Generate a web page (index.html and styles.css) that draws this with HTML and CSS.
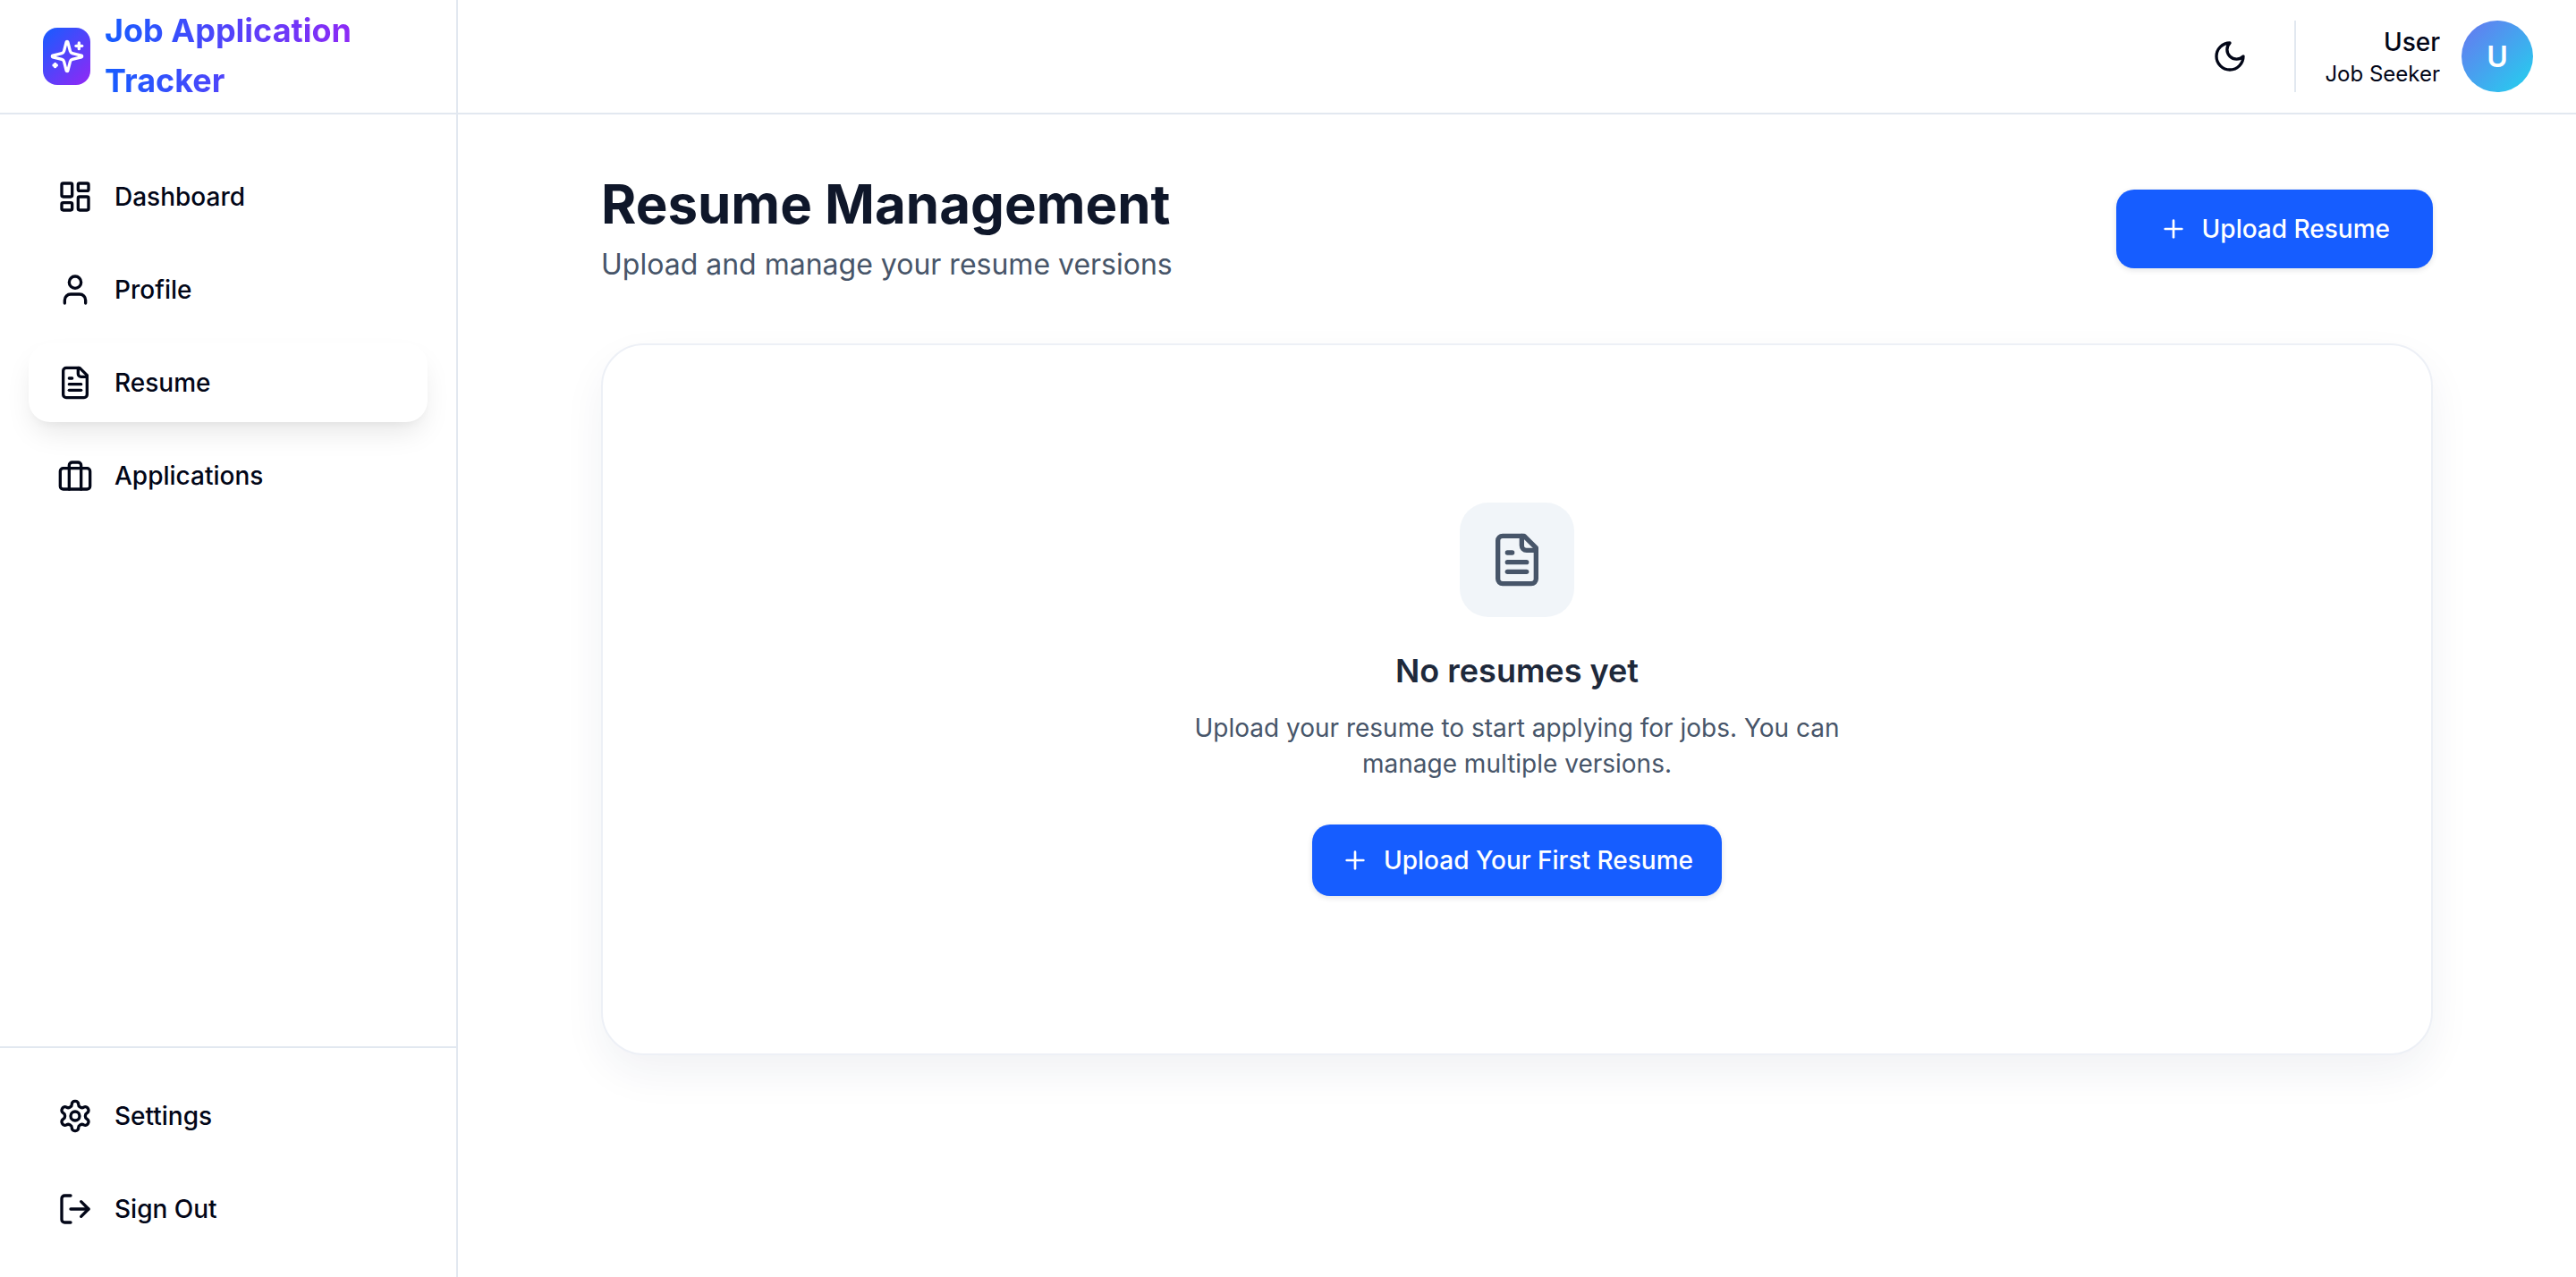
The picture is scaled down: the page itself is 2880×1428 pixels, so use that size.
FILE: index.html
```html
<!DOCTYPE html>
<html lang="en">
<head>
    <meta charset="UTF-8">
    <meta name="viewport" content="width=device-width, initial-scale=1.0">
    <title>Job Application Tracker</title>
    <link rel="stylesheet" href="styles.css">
</head>
<body>
    <div class="app">
        <aside class="sidebar">
            <div class="brand">
                <div class="brand-logo">
                    <svg class="icon" viewBox="0 0 24 24"><path d="M9.937 15.5A2 2 0 0 0 8.5 14.063l-6.135-1.582a.5.5 0 0 1 0-.962L8.5 9.936A2 2 0 0 0 9.937 8.5l1.582-6.135a.5.5 0 0 1 .963 0L14.063 8.5A2 2 0 0 0 15.5 9.937l6.135 1.581a.5.5 0 0 1 0 .964L15.5 14.063a2 2 0 0 0-1.437 1.437l-1.582 6.135a.5.5 0 0 1-.963 0z"/><path d="M20 3v4"/><path d="M22 5h-4"/><path d="M4 17v2"/><path d="M5 18H3"/></svg>
                </div>
                <span class="brand-name">Job Application Tracker</span>
            </div>
            <nav class="nav">
                <a class="nav-item" href="#">
                    <svg class="icon" viewBox="0 0 24 24"><rect x="3" y="3" width="7" height="9" rx="1"/><rect x="14" y="3" width="7" height="5" rx="1"/><rect x="14" y="12" width="7" height="9" rx="1"/><rect x="3" y="16" width="7" height="5" rx="1"/></svg>
                    Dashboard
                </a>
                <a class="nav-item" href="#">
                    <svg class="icon" viewBox="0 0 24 24"><path d="M19 21v-2a4 4 0 0 0-4-4H9a4 4 0 0 0-4 4v2"/><circle cx="12" cy="7" r="4"/></svg>
                    Profile
                </a>
                <a class="nav-item active" href="#">
                    <svg class="icon" viewBox="0 0 24 24"><path d="M15 2H6a2 2 0 0 0-2 2v16a2 2 0 0 0 2 2h12a2 2 0 0 0 2-2V7Z"/><path d="M14 2v4a2 2 0 0 0 2 2h4"/><path d="M10 9H8"/><path d="M16 13H8"/><path d="M16 17H8"/></svg>
                    Resume
                </a>
                <a class="nav-item" href="#">
                    <svg class="icon" viewBox="0 0 24 24"><rect x="2" y="7" width="20" height="14" rx="2"/><path d="M16 21V5a2 2 0 0 0-2-2h-4a2 2 0 0 0-2 2v16"/></svg>
                    Applications
                </a>
            </nav>
            <div class="nav nav-bottom">
                <a class="nav-item" href="#">
                    <svg class="icon" viewBox="0 0 24 24"><path d="M12.22 2h-.44a2 2 0 0 0-2 2v.18a2 2 0 0 1-1 1.73l-.43.25a2 2 0 0 1-2 0l-.15-.08a2 2 0 0 0-2.73.73l-.22.38a2 2 0 0 0 .73 2.73l.15.1a2 2 0 0 1 1 1.72v.51a2 2 0 0 1-1 1.74l-.15.09a2 2 0 0 0-.73 2.73l.22.38a2 2 0 0 0 2.73.73l.15-.08a2 2 0 0 1 2 0l.43.25a2 2 0 0 1 1 1.73V20a2 2 0 0 0 2 2h.44a2 2 0 0 0 2-2v-.18a2 2 0 0 1 1-1.73l.43-.25a2 2 0 0 1 2 0l.15.08a2 2 0 0 0 2.73-.73l.22-.39a2 2 0 0 0-.73-2.73l-.15-.08a2 2 0 0 1-1-1.74v-.5a2 2 0 0 1 1-1.74l.15-.09a2 2 0 0 0 .73-2.73l-.22-.38a2 2 0 0 0-2.73-.73l-.15.08a2 2 0 0 1-2 0l-.43-.25a2 2 0 0 1-1-1.73V4a2 2 0 0 0-2-2z"/><circle cx="12" cy="12" r="3"/></svg>
                    Settings
                </a>
                <a class="nav-item" href="#">
                    <svg class="icon" viewBox="0 0 24 24"><path d="M9 21H5a2 2 0 0 1-2-2V5a2 2 0 0 1 2-2h4"/><path d="m16 17 5-5-5-5"/><path d="M21 12H9"/></svg>
                    Sign Out
                </a>
            </div>
        </aside>

        <div class="content">
            <header class="topbar">
                <button class="theme-toggle" type="button" aria-label="Toggle theme">
                    <svg class="icon" viewBox="0 0 24 24"><path d="M12 3a6 6 0 0 0 9 9 9 9 0 1 1-9-9Z"/></svg>
                </button>
                <div class="topbar-divider"></div>
                <div class="user-info">
                    <span class="user-name">User</span>
                    <span class="user-role">Job Seeker</span>
                </div>
                <div class="avatar">U</div>
            </header>

            <main class="main">
                <div class="page-head">
                    <div>
                        <h1 class="page-title">Resume Management</h1>
                        <p class="page-subtitle">Upload and manage your resume versions</p>
                    </div>
                    <button class="btn btn-large" type="button">
                        <svg class="icon icon-small" viewBox="0 0 24 24"><path d="M5 12h14"/><path d="M12 5v14"/></svg>
                        Upload Resume
                    </button>
                </div>

                <section class="empty-card">
                    <div class="empty-icon">
                        <svg class="icon icon-large" viewBox="0 0 24 24"><path d="M15 2H6a2 2 0 0 0-2 2v16a2 2 0 0 0 2 2h12a2 2 0 0 0 2-2V7Z"/><path d="M14 2v4a2 2 0 0 0 2 2h4"/><path d="M10 9H8"/><path d="M16 13H8"/><path d="M16 17H8"/></svg>
                    </div>
                    <h2 class="empty-title">No resumes yet</h2>
                    <p class="empty-text">Upload your resume to start applying for jobs. You can manage multiple versions.</p>
                    <button class="btn" type="button">
                        <svg class="icon icon-small" viewBox="0 0 24 24"><path d="M5 12h14"/><path d="M12 5v14"/></svg>
                        Upload Your First Resume
                    </button>
                </section>
            </main>
        </div>
    </div>
</body>
</html>
```

FILE: styles.css
```css
* {
    box-sizing: border-box;
}

body {
    font-family: Inter, "Liberation Sans", sans-serif;
    background-color: #fff;
    color: #020617;
    margin: 0;
    padding: 0;
}

.app {
    display: flex;
    height: 100vh;
    overflow: hidden;
}

.icon {
    width: 40px;
    height: 40px;
    flex-shrink: 0;
    fill: none;
    stroke: currentColor;
    stroke-width: 2;
    stroke-linecap: round;
    stroke-linejoin: round;
}

.icon-small {
    width: 32px;
    height: 32px;
}

.icon-large {
    width: 64px;
    height: 64px;
}

/* sidebar */
.sidebar {
    width: 512px;
    flex-shrink: 0;
    display: flex;
    flex-direction: column;
    border-right: 2px solid #e2e8f0;
}

.brand {
    height: 128px;
    display: flex;
    align-items: center;
    gap: 16px;
    padding: 0 48px;
    border-bottom: 2px solid #e2e8f0;
}

.brand-logo {
    width: 53px;
    height: 64px;
    flex-shrink: 0;
    display: flex;
    align-items: center;
    justify-content: center;
    color: #fff;
    border-radius: 16px;
    background: linear-gradient(135deg, #165dff, #9327f5);
}

.brand-name {
    width: 290px;
    margin-top: -2px;
    font-size: 36px;
    font-weight: 700;
    line-height: 56px;
    color: transparent;
    background: linear-gradient(90deg, #165dff, #9327f5);
    -webkit-background-clip: text;
    background-clip: text;
}

.nav {
    flex: 1;
    display: flex;
    flex-direction: column;
    gap: 16px;
    padding: 48px 32px 32px;
}

.nav-bottom {
    flex: none;
    padding-top: 32px;
    border-top: 2px solid #e2e8f0;
}

.nav-item {
    height: 88px;
    display: flex;
    align-items: center;
    gap: 24px;
    padding: 0 32px;
    font-size: 28px;
    font-weight: 500;
    color: #020617;
    text-decoration: none;
    border-radius: 24px;
}

.nav-item.active {
    background-color: #fff;
    box-shadow: 0 16px 32px -6px rgba(0, 0, 0, 0.1), 0 6px 12px -6px rgba(0, 0, 0, 0.06);
}

/* top bar */
.content {
    flex: 1;
    min-width: 0;
    display: flex;
    flex-direction: column;
}

.topbar {
    height: 128px;
    flex-shrink: 0;
    display: flex;
    align-items: center;
    justify-content: flex-end;
    padding: 0 48px;
    border-bottom: 2px solid #e2e8f0;
}

.theme-toggle {
    width: 72px;
    height: 72px;
    display: flex;
    align-items: center;
    justify-content: center;
    padding: 0;
    margin-right: 36px;
    color: #020617;
    background: none;
    border: none;
}

.topbar-divider {
    width: 2px;
    height: 80px;
    margin-right: 32px;
    background-color: #e2e8f0;
}

.user-info {
    display: flex;
    flex-direction: column;
    align-items: flex-end;
    margin-right: 24px;
}

.user-name {
    font-size: 28px;
    font-weight: 500;
    line-height: 40px;
}

.user-role {
    font-size: 24px;
    line-height: 32px;
}

.avatar {
    width: 80px;
    height: 80px;
    display: flex;
    align-items: center;
    justify-content: center;
    color: #fff;
    font-size: 32px;
    font-weight: 600;
    border-radius: 50%;
    background: linear-gradient(135deg, #6875f0, #22d3ee);
}

/* resume page */
.main {
    flex: 1;
    padding: 64px 160px;
}

.page-head {
    display: flex;
    align-items: center;
    justify-content: space-between;
    margin-bottom: 64px;
}

.page-title {
    margin: 0 0 8px;
    font-size: 60px;
    font-weight: 700;
    line-height: 72px;
    color: #0f172a;
}

.page-subtitle {
    margin: 0;
    font-size: 32px;
    line-height: 48px;
    color: #475569;
}

.btn {
    height: 80px;
    display: inline-flex;
    align-items: center;
    gap: 16px;
    padding: 0 32px;
    font-family: inherit;
    font-size: 28px;
    font-weight: 550;
    color: #fff;
    background-color: #165dff;
    border: none;
    border-radius: 20px;
    box-shadow: 0 2px 6px rgba(15, 23, 42, 0.12);
}

.btn-large {
    height: 88px;
    padding: 0 48px;
}

.empty-card {
    display: flex;
    flex-direction: column;
    align-items: center;
    padding: 176px 0;
    background-color: #fff;
    border: 2px solid #edf0f6;
    border-radius: 48px;
    box-shadow: 0 20px 50px -4px rgba(30, 41, 90, 0.07);
}

.empty-icon {
    width: 128px;
    height: 128px;
    display: flex;
    align-items: center;
    justify-content: center;
    margin-bottom: 32px;
    color: #475569;
    background-color: #f1f5f9;
    border-radius: 32px;
}

.empty-title {
    margin: 0 0 16px;
    font-size: 36px;
    font-weight: 600;
    line-height: 56px;
    color: #1e293b;
}

.empty-text {
    width: 768px;
    margin: 0 0 48px;
    font-size: 28px;
    line-height: 40px;
    text-align: center;
    color: #475569;
}
```
